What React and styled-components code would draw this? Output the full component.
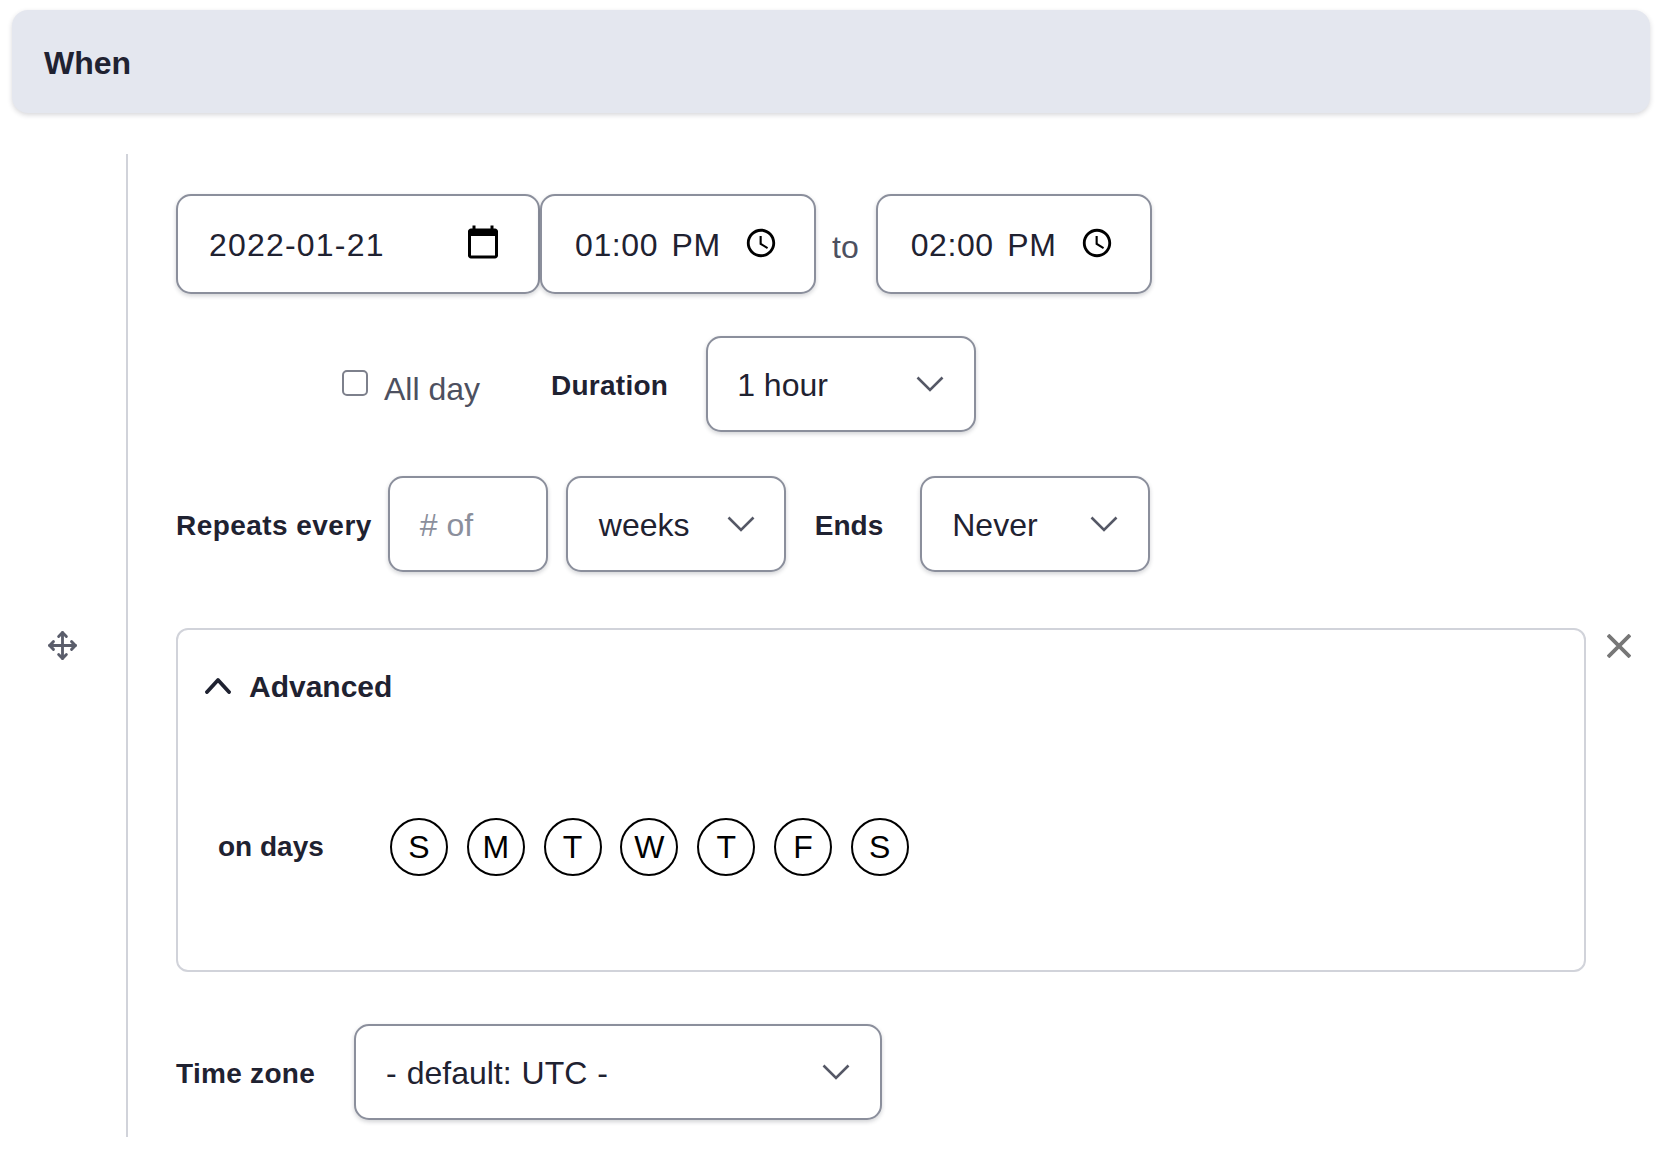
import React from "react";
import styled, { createGlobalStyle } from "styled-components";
import { Move } from "lucide-react";

const Global = createGlobalStyle`
  html, body { margin: 0; padding: 0; background: #fff; }
  body { font-family: "Liberation Sans", Arial, sans-serif; color: #1f2231; }
`;

const Page = styled.div`
  padding: 10px 11px 0;
`;

const Banner = styled.header`
  box-sizing: border-box;
  height: 103px;
  margin: 0 1px;
  display: flex;
  align-items: center;
  padding: 4px 0 0 32px;
  background: #e4e7ef;
  border-radius: 16px;
  box-shadow: 0 2px 5px rgba(31, 34, 49, 0.18);
  font-size: 32px;
  font-weight: 700;
  color: #1f2231;
`;

const Section = styled.section`
  display: grid;
  grid-template-columns: 115px 1fr 64px;
  margin-top: 41px;
  height: 983px;
`;

const Handle = styled.div`
  display: flex;
  align-items: center;
  justify-content: center;
  padding-right: 12px;
  color: #5a5d6b;
`;

const Content = styled.div`
  border-left: 2px solid #d1d3da;
  padding: 40px 0 0 48px;
  display: flex;
  flex-direction: column;
`;

const Close = styled.div`
  display: flex;
  align-items: center;
  justify-content: center;
  color: #777;
`;

const Row = styled.div`
  display: flex;
  align-items: center;
  gap: ${(p) => p.$gap || 0}px;
  margin-top: ${(p) => p.$top || 0}px;
  padding-left: ${(p) => p.$left || 0}px;
`;

const Field = styled.div`
  box-sizing: border-box;
  width: ${(p) => p.$w}px;
  height: ${(p) => p.$h || 96}px;
  flex: none;
  display: flex;
  align-items: center;
  justify-content: space-between;
  padding: 0 ${(p) => p.$right || 30}px 0 ${(p) => p.$pad || 30}px;
  background: #fff;
  border: 2px solid #8b8f9c;
  border-radius: 15px;
  box-shadow: 0 2px 4px rgba(31, 34, 49, 0.2);
  font-size: 32px;
  color: #1f2231;
`;

const Value = styled.span`
  margin-top: 2px;
  word-spacing: ${(p) => p.$words || 0}px;
`;

const DateText = styled(Value)`
  letter-spacing: 1.2px;
`;

const TimeText = styled(Value)`
  letter-spacing: 0.6px;
  word-spacing: 4px;
`;

const Placeholder = styled(Value)`
  color: #8b8f9c;
`;

const Muted = styled.span`
  font-size: 32px;
  color: #4d5060;
  margin-top: ${(p) => p.$top || 0}px;
`;

const To = styled(Muted)`
  margin: 6px 17px 0 16px;
`;

const Label = styled.label`
  font-size: 28px;
  font-weight: 700;
  color: #1f2231;
  margin-top: 4px;
  letter-spacing: ${(p) => p.$track ?? 0.25}px;
`;

const RepeatLabel = styled(Label)`
  margin-right: -2px;
`;

const Check = styled.span`
  box-sizing: border-box;
  width: 26px;
  height: 26px;
  flex: none;
  margin-top: -2px;
  border: 2px solid #7d808c;
  border-radius: 5px;
  background: #fff;
`;

const Group = styled.div`
  display: flex;
  align-items: center;
  gap: ${(p) => p.$gap}px;
  margin-left: ${(p) => p.$left || 0}px;
`;

const Advanced = styled.div`
  box-sizing: border-box;
  width: 1410px;
  height: 344px;
  margin-top: 56px;
  border: 2px solid #d1d3da;
  border-radius: 12px;
  padding: 37px 0 0 27px;
`;

const AdvancedHead = styled.div`
  display: flex;
  align-items: center;
  gap: 18px;
  height: 40px;
  font-size: 30px;
  font-weight: 700;
`;

const DaysRow = styled.div`
  display: flex;
  align-items: center;
  margin-top: 111px;
  padding-left: 13px;
`;

const DaysLabel = styled(Label)`
  width: 172px;
  margin-top: 0;
`;

const Days = styled.div`
  display: flex;
  gap: 18.8px;
`;

const Day = styled.span`
  box-sizing: border-box;
  width: 58px;
  height: 58px;
  border: 2px solid #000;
  border-radius: 50%;
  display: flex;
  align-items: center;
  justify-content: center;
  font-size: 32px;
  color: #000;
`;

const Glyph = styled.svg`
  flex: none;
  margin-bottom: ${(p) => p.$lift || 0}px;
`;

const Chevron = () => (
  <Glyph width="28" height="16" viewBox="0 0 28 16" fill="none" stroke="#555866" strokeWidth="2.6">
    <path d="M1.5 1.5L14 14L26.5 1.5" />
  </Glyph>
);

const Calendar = () => (
  <Glyph $lift={4} width="36" height="36" viewBox="0 0 24 24" fill="#000">
    <path d="M20 3h-1V1h-2v2H7V1H5v2H4c-1.1 0-2 .9-2 2v16c0 1.1.9 2 2 2h16c1.1 0 2-.9 2-2V5c0-1.1-.9-2-2-2zm0 18H4V8h16v13z" />
  </Glyph>
);

const Clock = () => (
  <Glyph $lift={2} width="34" height="34" viewBox="0 0 24 24" fill="#000">
    <path d="M11.99 2C6.47 2 2 6.48 2 12s4.47 10 9.99 10C17.52 22 22 17.52 22 12S17.52 2 11.99 2zM12 20c-4.42 0-8-3.58-8-8s3.58-8 8-8 8 3.58 8 8-3.58 8-8 8zm.5-13H11v6l5.25 3.15.75-1.23-4.5-2.67z" />
  </Glyph>
);

const CloseIcon = () => (
  <svg width="24" height="24" viewBox="0 0 24 24" fill="none" stroke="currentColor" strokeWidth="3.8">
    <path d="M1 1L23 23M23 1L1 23" />
  </svg>
);

const ChevronUp = () => (
  <Glyph $lift={4} width="26" height="17" viewBox="0 0 26 17" fill="none" stroke="#1f2231" strokeWidth="3.8" strokeLinecap="round" strokeLinejoin="round">
    <path d="M2 15L13 3L24 15" />
  </Glyph>
);

export default function App() {
  return (
    <Page>
      <Global />
      <Banner>When</Banner>
      <Section>
        <Handle>
          <Move size={31} strokeWidth={2.2} />
        </Handle>
        <Content>
          <Row>
            <Field $w={364} $h={100} $pad={31} $right={37}>
              <DateText>2022-01-21</DateText>
              <Calendar />
            </Field>
            <Field $w={276} $h={100} $pad={33} $right={36}>
              <TimeText>01:00 PM</TimeText>
              <Clock />
            </Field>
            <To>to</To>
            <Field $w={276} $h={100} $pad={33} $right={36}>
              <TimeText>02:00 PM</TimeText>
              <Clock />
            </Field>
          </Row>
          <Row $top={42} $left={166} $gap={71}>
            <Group $gap={16}>
              <Check />
              <Muted $top={10}>All day</Muted>
            </Group>
            <Group $gap={38}>
              <Label>Duration</Label>
              <Field $w={270} $pad={29}>
                <Value>1 hour</Value>
                <Chevron />
              </Field>
            </Group>
          </Row>
          <Row $top={44} $gap={18}>
            <RepeatLabel $track={0.45}>Repeats every</RepeatLabel>
            <Field $w={160}>
              <Placeholder># of</Placeholder>
            </Field>
            <Field $w={220} $pad={31} $right={29}>
              <Value>weeks</Value>
              <Chevron />
            </Field>
            <Group $gap={37} $left={11}>
              <Label $track={0}>Ends</Label>
              <Field $w={230}>
                <Value>Never</Value>
                <Chevron />
              </Field>
            </Group>
          </Row>
          <Advanced>
            <AdvancedHead>
              <ChevronUp />
              <span>Advanced</span>
            </AdvancedHead>
            <DaysRow>
              <DaysLabel $track={0}>on days</DaysLabel>
              <Days>
                {["S", "M", "T", "W", "T", "F", "S"].map((d, i) => (
                  <Day key={i}>{d}</Day>
                ))}
              </Days>
            </DaysRow>
          </Advanced>
          <Row $top={52} $gap={39}>
            <Label $track={0.3}>Time zone</Label>
            <Field $w={528}>
              <Value $words={1}>- default: UTC -</Value>
              <Chevron />
            </Field>
          </Row>
        </Content>
        <Close>
          <CloseIcon />
        </Close>
      </Section>
    </Page>
  );
}
